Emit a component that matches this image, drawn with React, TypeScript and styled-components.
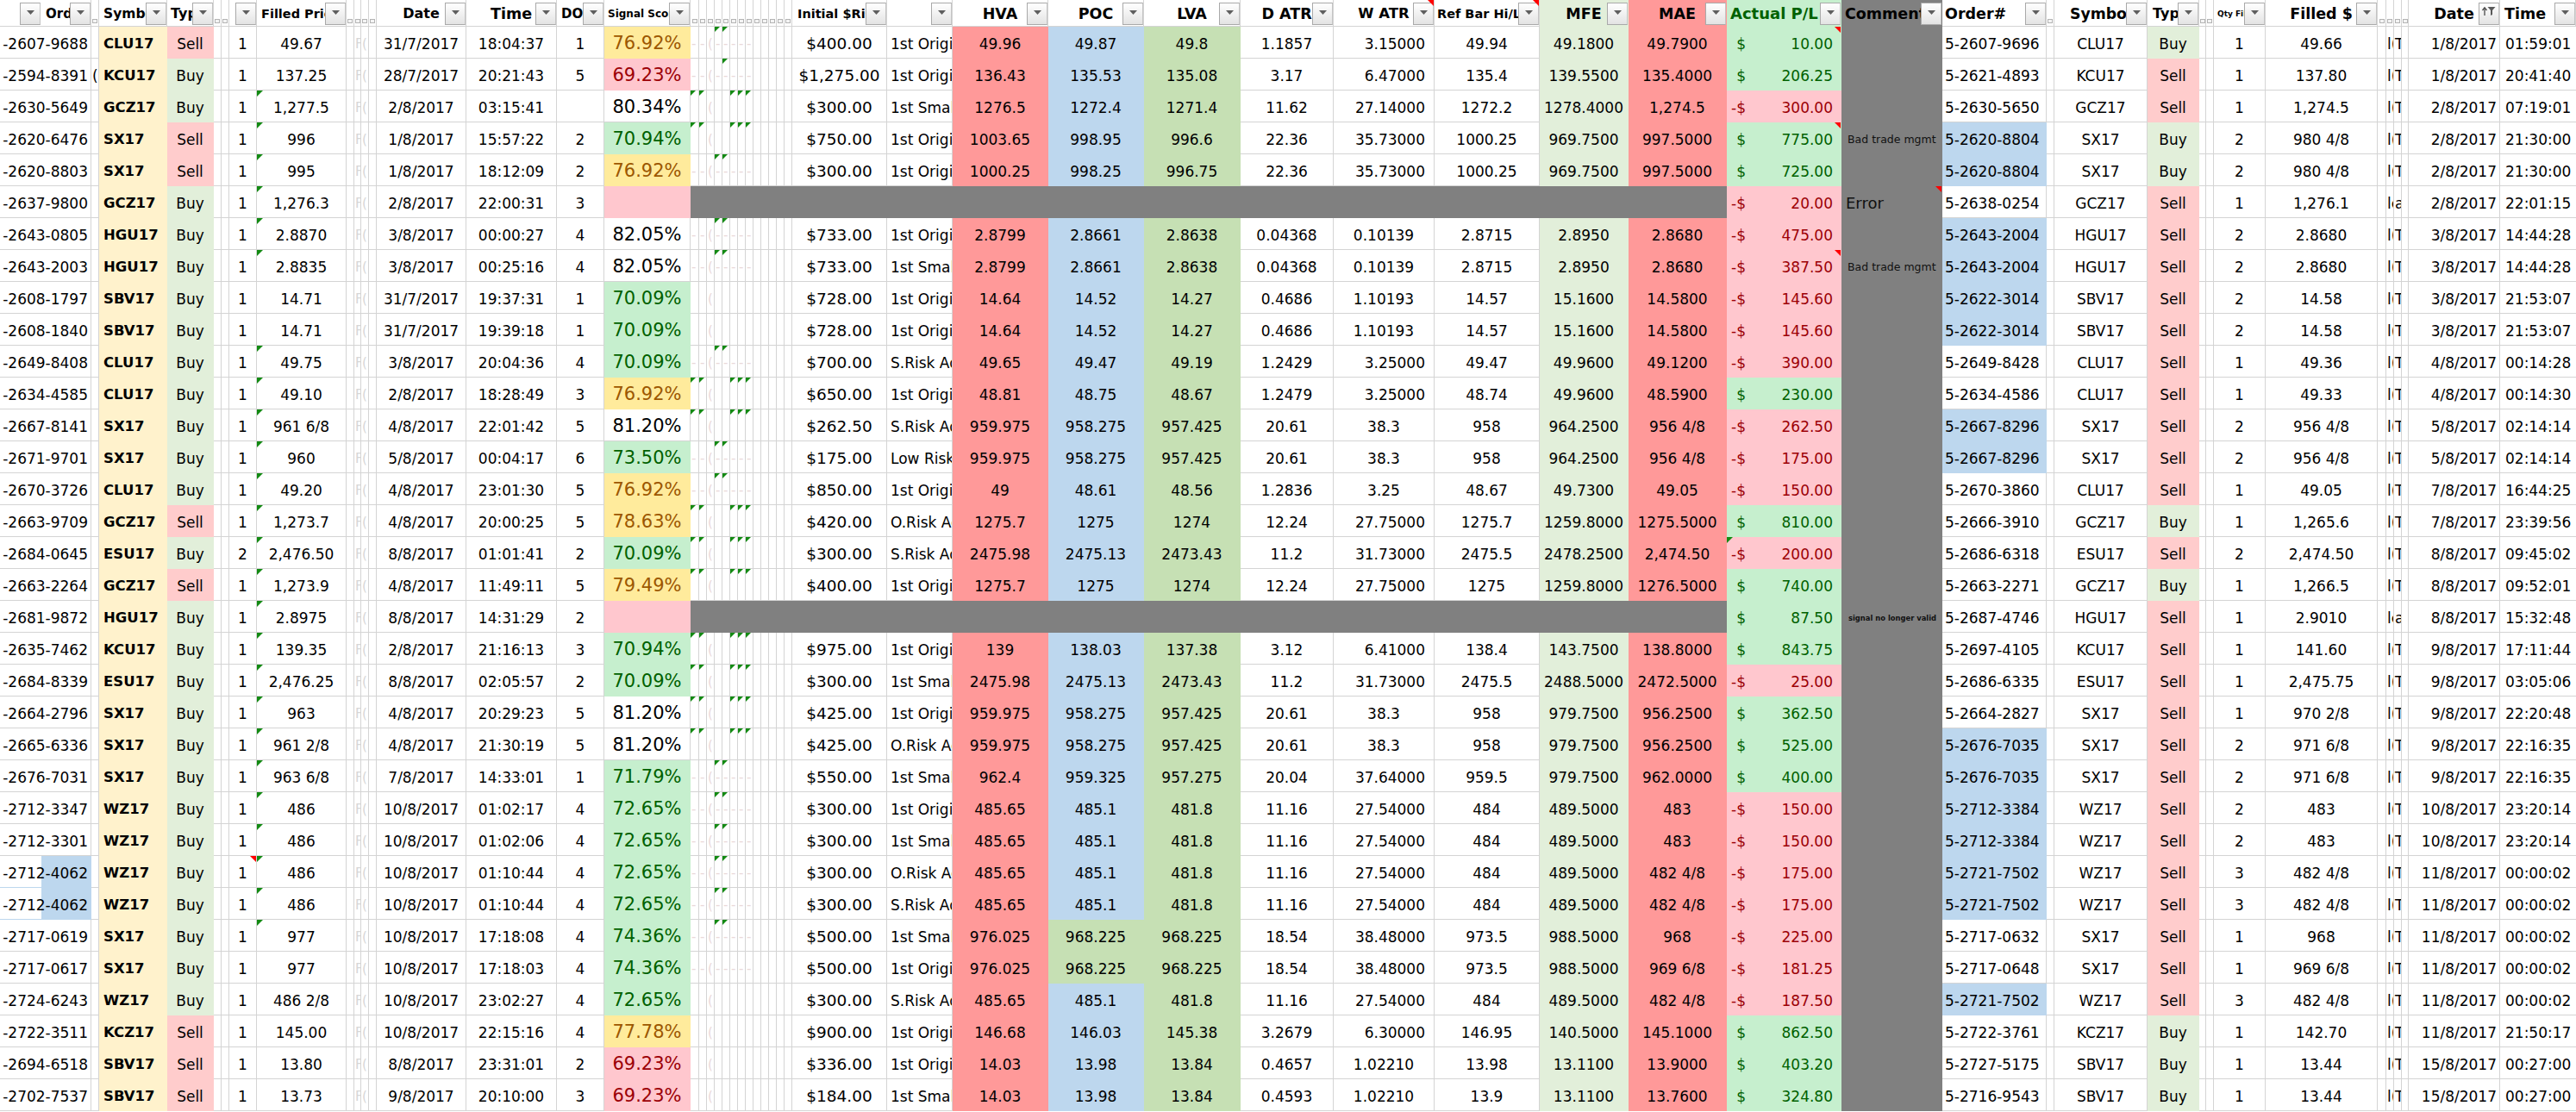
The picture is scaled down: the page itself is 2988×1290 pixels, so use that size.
import React from 'react';
import styled, { createGlobalStyle, css } from 'styled-components';

const GRID = '#d4d4d4';
const YEL = '#fff2cc';
const SELL = '#ffcccc';
const BUY = '#e2efda';
const HVA = '#ff9999';
const POC = '#bdd7ee';
const LVA = '#c6e0b4';
const MFE = '#e2efda';
const MAE = '#ff9999';
const GOODBG = '#c6efce';
const GOODFG = '#006100';
const BADBG = '#ffc7ce';
const BADFG = '#9c0006';
const NEUBG = '#ffeb9c';
const NEUFG = '#9c5700';
const GRAY = '#808080';
const BLUE = '#bdd7ee';

const WIDTHS = [
  106, 9, 79, 54, 9, 9, 32, 104, 9, 8, 9, 9, 104, 105, 55, 100,
  10, 9, 9, 9, 9, 9, 9, 9, 9, 9, 9, 9, 9,
  110, 76, 111, 111, 112, 108, 117, 122, 103, 114, 133, 117, 121, 9, 108, 60, 8, 9, 60, 130, 10, 9, 9, 8, 106, 88,
];
const TEMPLATE = WIDTHS.map((w) => `${w}px`).join(' ');
const TOTAL = WIDTHS.reduce((a, b) => a + b, 0);

const GlobalStyle = createGlobalStyle`
  html, body { margin: 0; padding: 0; background: #fff; overflow: hidden; }
  body { font-family: "DejaVu Sans", Verdana, sans-serif; }
`;

const Sheet = styled.div`
  display: flex;
  flex-direction: column;
  width: ${TOTAL}px;
  font-family: "DejaVu Sans", Verdana, sans-serif;
`;

const Row = styled.div<{ $h: number }>`
  display: grid;
  grid-template-columns: ${TEMPLATE};
  height: ${(p) => p.$h}px;
`;

const cellBase = css`
  position: relative;
  box-sizing: border-box;
  height: 100%;
  display: flex;
  align-items: center;
  padding-top: 3px;
  white-space: nowrap;
  overflow: hidden;
  font-size: 17px;
  color: #000;
  background: #fff;
  border-right: 1px solid ${GRID};
  border-bottom: 1px solid ${GRID};
`;

const filled = (bg?: string) =>
  bg
    ? css`
        background: ${bg};
        border-color: ${bg};
      `
    : '';

/* ---------- header ---------- */

const HeaderCell = styled.div<{ $bg?: string; $align?: 'left' | 'center'; $pad?: number; $size?: number; $fg?: string }>`
  position: relative;
  box-sizing: border-box;
  height: 100%;
  display: flex;
  align-items: center;
  justify-content: ${(p) => (p.$align === 'center' ? 'center' : 'flex-start')};
  padding-left: ${(p) => (p.$align === 'center' ? 0 : p.$pad ?? 4)}px;
  padding-top: 1px;
  background: ${(p) => p.$bg ?? '#fff'};
  border-right: 1px solid ${(p) => p.$bg ?? GRID};
  border-bottom: 1px solid ${(p) => p.$bg ?? GRID};
  font-weight: 700;
  font-size: ${(p) => p.$size ?? 17}px;
  color: ${(p) => p.$fg ?? '#000'};
  white-space: nowrap;
  overflow: hidden;
`;

const FilterButton = styled.span<{ $left?: number }>`
  position: absolute;
  top: 3px;
  ${(p) => (p.$left !== undefined ? `left: ${p.$left}px;` : 'right: 0;')}
  width: 24px;
  height: 26px;
  box-sizing: border-box;
  border: 1px solid #a9a9a9;
  border-right-color: #c4c4c4;
  background: linear-gradient(#ffffff, #e3e3e3);
  display: flex;
  justify-content: center;
  align-items: flex-start;
  padding-top: 8px;
`;

const TinyIcon = styled.span`
  position: absolute;
  bottom: 3px;
  left: 50%;
  margin-left: -3px;
  width: 6px;
  height: 5px;
  box-sizing: border-box;
  border: 1px solid #b4b4b4;
  background: #f4f4f4;
`;

const GreenMark = styled.span<{ $size?: number }>`
  position: absolute;
  top: 0;
  left: 0;
  width: 0;
  height: 0;
  border-top: ${(p) => p.$size ?? 7}px solid #138a13;
  border-right: ${(p) => p.$size ?? 7}px solid transparent;
`;

const RedMark = styled.span`
  position: absolute;
  top: 0;
  right: 0;
  width: 0;
  height: 0;
  border-top: 7px solid #ff0000;
  border-left: 7px solid transparent;
`;

const Dropdown = ({ left }: { left?: number }) => (
  <FilterButton $left={left}>
    <svg width="9" height="5" viewBox="0 0 9 5">
      <path d="M0 0h9L4.5 5z" fill="#5f5f5f" />
    </svg>
  </FilterButton>
);

const SortDropdown = () => (
  <FilterButton>
    <svg width="18" height="12" viewBox="0 0 18 12" style={{ marginTop: -5 }}>
      <path d="M4 11V3" stroke="#4a4a4a" strokeWidth="1.3" />
      <path d="M1.5 5L4 1.8 6.5 5" fill="none" stroke="#4a4a4a" strokeWidth="1.3" />
      <path d="M7.5 1h9l-3.5 4v5l-2 1V5z" fill="#5a5a5a" />
    </svg>
  </FilterButton>
);

type Head = {
  t?: string;
  s?: number;
  a?: 'left' | 'center';
  p?: number;
  b?: boolean;
  bg?: string;
  c?: string;
  lb?: boolean;
  red?: boolean;
  sort?: boolean;
  ic?: boolean;
};

const NARROW_HEAD: Head = { ic: true };
const HEAD: Head[] = [
  { t: 'Order#', s: 15, a: 'left', p: 53, b: true, lb: true },
  NARROW_HEAD,
  { t: 'Symbol', s: 15.5, a: 'left', p: 5, b: true },
  { t: 'Type', s: 16, a: 'left', p: 4, b: true },
  NARROW_HEAD,
  NARROW_HEAD,
  { b: true },
  { t: 'Filled Price', s: 14.5, a: 'left', p: 5, b: true },
  NARROW_HEAD,
  NARROW_HEAD,
  NARROW_HEAD,
  NARROW_HEAD,
  { t: 'Date', s: 16, a: 'center', b: true },
  { t: 'Time', s: 17.5, a: 'center', b: true },
  { t: 'DOW', s: 15, a: 'left', p: 5, b: true },
  { t: 'Signal Score', s: 12, a: 'left', p: 4, b: true },
  ...Array.from({ length: 13 }, () => NARROW_HEAD),
  { t: 'Initial $Risk', s: 14.5, a: 'left', p: 6, b: true },
  { b: true },
  { t: 'HVA', s: 17.5, a: 'center', b: true },
  { t: 'POC', s: 17.5, a: 'center', b: true },
  { t: 'LVA', s: 17.5, a: 'center', b: true },
  { t: 'D ATR', s: 17.5, a: 'center', b: true },
  { t: 'W ATR', s: 16.5, a: 'center', b: true, red: true },
  { t: 'Ref Bar Hi/Lo', s: 14.5, a: 'left', p: 3, b: true, red: true },
  { t: 'MFE', s: 17.5, a: 'center', b: true, bg: MFE },
  { t: 'MAE', s: 17.5, a: 'center', b: true, bg: MAE },
  { t: 'Actual P/L', s: 18, a: 'left', p: 4, b: true, bg: GOODBG, c: GOODFG },
  { t: 'Comments', s: 17.5, a: 'left', p: 4, b: true, bg: GRAY },
  { t: 'Order#', s: 17.5, a: 'left', p: 3, b: true },
  NARROW_HEAD,
  { t: 'Symbol', s: 17.3, a: 'left', p: 18, b: true },
  { t: 'Type', s: 16, a: 'left', p: 6, b: true },
  NARROW_HEAD,
  NARROW_HEAD,
  { t: 'Qty Filled', s: 9, a: 'left', p: 4, b: true },
  { t: 'Filled $', s: 17.5, a: 'center', b: true },
  NARROW_HEAD,
  NARROW_HEAD,
  NARROW_HEAD,
  NARROW_HEAD,
  { t: 'Date', s: 17.5, a: 'center', b: true, sort: true },
  { t: 'Time', s: 17.5, a: 'left', p: 5, b: true },
];

/* ---------- body cells ---------- */

const OrderCell = styled.div<{ $hl?: boolean }>`
  ${cellBase}
  justify-content: flex-end;
  padding-right: 3px;
  ${(p) =>
    p.$hl &&
    css`
      background: linear-gradient(to right, #fff 48px, ${BLUE} 48px);
      border-right-color: ${BLUE};
      border-bottom-color: ${BLUE};
    `}
`;

const SymbolCell = styled.div`
  ${cellBase}
  ${filled(YEL)}
  justify-content: flex-start;
  padding-left: 5px;
  font-weight: 700;
  font-size: 16.5px;
`;

const TypeCell = styled.div<{ $sell: boolean }>`
  ${cellBase}
  ${(p) => filled(p.$sell ? SELL : BUY)}
  justify-content: center;
`;

const NarrowCell = styled.div<{ $tone?: 'faint' | 'pink' | 'dark' }>`
  ${cellBase}
  justify-content: flex-start;
  padding-left: 1px;
  color: ${(p) => (p.$tone === 'faint' ? '#d6d6d6' : p.$tone === 'pink' ? '#ead9d9' : '#000')};
  font-size: ${(p) => (p.$tone === 'dark' ? 17 : 15)}px;
`;

const ValueCell = styled.div<{ $bg?: string; $size?: number }>`
  ${cellBase}
  ${(p) => filled(p.$bg)}
  justify-content: center;
  font-size: ${(p) => p.$size ?? 17}px;
`;

const AtrCell = styled.div<{ $right: boolean }>`
  ${cellBase}
  justify-content: ${(p) => (p.$right ? 'flex-end' : 'center')};
  padding-right: ${(p) => (p.$right ? 10 : 0)}px;
`;

type Tone = 'y' | 'r' | 'g' | 'w' | 'p';
const TONES: Record<Tone, [string | undefined, string]> = {
  y: [NEUBG, NEUFG],
  r: [BADBG, BADFG],
  g: [GOODBG, GOODFG],
  w: [undefined, '#000'],
  p: [BADBG, BADFG],
};

const SignalCell = styled.div<{ $tone: Tone }>`
  ${cellBase}
  ${(p) => filled(TONES[p.$tone]?.[0])}
  color: ${(p) => TONES[p.$tone]?.[1] ?? '#000'};
  justify-content: center;
  font-size: 21px;
  padding-top: 2px;
`;

const RiskCell = styled.div`
  ${cellBase}
  justify-content: center;
  font-size: 18.5px;
`;

const SetupCell = styled.div`
  ${cellBase}
  justify-content: flex-start;
  padding-left: 4px;
`;

const SeparatorCell = styled.div`
  ${cellBase}
  ${filled(GRAY)}
  grid-column: 17 / 40;
`;

const PLCell = styled.div<{ $neg: boolean }>`
  ${cellBase}
  ${(p) => filled(p.$neg ? BADBG : GOODBG)}
  color: ${(p) => (p.$neg ? BADFG : GOODFG)};
  padding-right: 9px;
`;

const PLSign = styled.span`
  flex: none;
  width: 22px;
  text-align: right;
`;

const PLAmount = styled.span`
  flex: 1;
  text-align: right;
`;

const CommentCell = styled.div<{ $size: number; $pad: number; $weight?: number }>`
  ${cellBase}
  ${filled(GRAY)}
  color: #111;
  justify-content: flex-start;
  padding-left: ${(p) => p.$pad}px;
  font-size: ${(p) => p.$size}px;
  font-weight: ${(p) => p.$weight ?? 400};
`;

const RightOrderCell = styled.div<{ $blue: boolean }>`
  ${cellBase}
  ${(p) => filled(p.$blue ? BLUE : undefined)}
  justify-content: flex-start;
  padding-left: 3px;
`;

const RightDateCell = styled.div`
  ${cellBase}
  justify-content: flex-end;
  padding-right: 3px;
`;

const RightTimeCell = styled.div`
  ${cellBase}
  justify-content: flex-start;
  padding-left: 6px;
  border-right: none;
`;

/* ---------- data ---------- */

const LEFT = `
-2607-9688|CLU17|Sell|1|49.67|31/7/2017|18:04:37|1|76.92%|y|A|$400.00|1st Original|49.96|49.87|49.8|1.1857|3.15000|49.94|49.1800|49.7900|10.00
-2594-8391|KCU17|Buy|1|137.25|28/7/2017|20:21:43|5|69.23%|r|C|$1,275.00|1st Original|136.43|135.53|135.08|3.17|6.47000|135.4|139.5500|135.4000|206.25
-2630-5649|GCZ17|Buy|1|1,277.5|2/8/2017|03:15:41||80.34%|w|B|$300.00|1st Small|1276.5|1272.4|1271.4|11.62|27.14000|1272.2|1278.4000|1,274.5|-300.00
-2620-6476|SX17|Sell|1|996|1/8/2017|15:57:22|2|70.94%|g|B|$750.00|1st Original|1003.65|998.95|996.6|22.36|35.73000|1000.25|969.7500|997.5000|775.00
-2620-8803|SX17|Sell|1|995|1/8/2017|18:12:09|2|76.92%|y|A|$300.00|1st Original|1000.25|998.25|996.75|22.36|35.73000|1000.25|969.7500|997.5000|725.00
-2637-9800|GCZ17|Buy|1|1,276.3|2/8/2017|22:00:31|3||p|X|-20.00
-2643-0805|HGU17|Buy|1|2.8870|3/8/2017|00:00:27|4|82.05%|w|A|$733.00|1st Original|2.8799|2.8661|2.8638|0.04368|0.10139|2.8715|2.8950|2.8680|-475.00
-2643-2003|HGU17|Buy|1|2.8835|3/8/2017|00:25:16|4|82.05%|w|A|$733.00|1st Small|2.8799|2.8661|2.8638|0.04368|0.10139|2.8715|2.8950|2.8680|-387.50
-2608-1797|SBV17|Buy|1|14.71|31/7/2017|19:37:31|1|70.09%|g||$728.00|1st Original|14.64|14.52|14.27|0.4686|1.10193|14.57|15.1600|14.5800|-145.60
-2608-1840|SBV17|Buy|1|14.71|31/7/2017|19:39:18|1|70.09%|g||$728.00|1st Original|14.64|14.52|14.27|0.4686|1.10193|14.57|15.1600|14.5800|-145.60
-2649-8408|CLU17|Buy|1|49.75|3/8/2017|20:04:36|4|70.09%|g|A|$700.00|S.Risk Adj|49.65|49.47|49.19|1.2429|3.25000|49.47|49.9600|49.1200|-390.00
-2634-4585|CLU17|Buy|1|49.10|2/8/2017|18:28:49|3|76.92%|y|B|$650.00|1st Original|48.81|48.75|48.67|1.2479|3.25000|48.74|49.9600|48.5900|230.00
-2667-8141|SX17|Buy|1|961 6/8|4/8/2017|22:01:42|5|81.20%|w|B|$262.50|S.Risk Adj|959.975|958.275|957.425|20.61|38.3|958|964.2500|956 4/8|-262.50
-2671-9701|SX17|Buy|1|960|5/8/2017|00:04:17|6|73.50%|g|A|$175.00|Low Risk|959.975|958.275|957.425|20.61|38.3|958|964.2500|956 4/8|-175.00
-2670-3726|CLU17|Buy|1|49.20|4/8/2017|23:01:30|5|76.92%|y|A|$850.00|1st Original|49|48.61|48.56|1.2836|3.25|48.67|49.7300|49.05|-150.00
-2663-9709|GCZ17|Sell|1|1,273.7|4/8/2017|20:00:25|5|78.63%|y|B|$420.00|O.Risk Adj|1275.7|1275|1274|12.24|27.75000|1275.7|1259.8000|1275.5000|810.00
-2684-0645|ESU17|Buy|2|2,476.50|8/8/2017|01:01:41|2|70.09%|g|B|$300.00|S.Risk Adj|2475.98|2475.13|2473.43|11.2|31.73000|2475.5|2478.2500|2,474.50|-200.00
-2663-2264|GCZ17|Sell|1|1,273.9|4/8/2017|11:49:11|5|79.49%|y|B|$400.00|1st Original|1275.7|1275|1274|12.24|27.75000|1275|1259.8000|1276.5000|740.00
-2681-9872|HGU17|Buy|1|2.8975|8/8/2017|14:31:29|2||p|X|87.50
-2635-7462|KCU17|Buy|1|139.35|2/8/2017|21:16:13|3|70.94%|g|B|$975.00|1st Original|139|138.03|137.38|3.12|6.41000|138.4|143.7500|138.8000|843.75
-2684-8339|ESU17|Buy|1|2,476.25|8/8/2017|02:05:57|2|70.09%|g|B|$300.00|1st Small|2475.98|2475.13|2473.43|11.2|31.73000|2475.5|2488.5000|2472.5000|-25.00
-2664-2796|SX17|Buy|1|963|4/8/2017|20:29:23|5|81.20%|w|B|$425.00|1st Original|959.975|958.275|957.425|20.61|38.3|958|979.7500|956.2500|362.50
-2665-6336|SX17|Buy|1|961 2/8|4/8/2017|21:30:19|5|81.20%|w|B|$425.00|O.Risk Adj|959.975|958.275|957.425|20.61|38.3|958|979.7500|956.2500|525.00
-2676-7031|SX17|Buy|1|963 6/8|7/8/2017|14:33:01|1|71.79%|g|A|$550.00|1st Small|962.4|959.325|957.275|20.04|37.64000|959.5|979.7500|962.0000|400.00
-2712-3347|WZ17|Buy|1|486|10/8/2017|01:02:17|4|72.65%|g|A|$300.00|1st Original|485.65|485.1|481.8|11.16|27.54000|484|489.5000|483|-150.00
-2712-3301|WZ17|Buy|1|486|10/8/2017|01:02:06|4|72.65%|g|A|$300.00|1st Small|485.65|485.1|481.8|11.16|27.54000|484|489.5000|483|-150.00
-2712-4062|WZ17|Buy|1|486|10/8/2017|01:10:44|4|72.65%|g|A|$300.00|O.Risk Adj|485.65|485.1|481.8|11.16|27.54000|484|489.5000|482 4/8|-175.00
-2712-4062|WZ17|Buy|1|486|10/8/2017|01:10:44|4|72.65%|g|A|$300.00|S.Risk Adj|485.65|485.1|481.8|11.16|27.54000|484|489.5000|482 4/8|-175.00
-2717-0619|SX17|Buy|1|977|10/8/2017|17:18:08|4|74.36%|g|A|$500.00|1st Small|976.025|968.225|968.225|18.54|38.48000|973.5|988.5000|968|-225.00
-2717-0617|SX17|Buy|1|977|10/8/2017|17:18:03|4|74.36%|g|D|$500.00|1st Original|976.025|968.225|968.225|18.54|38.48000|973.5|988.5000|969 6/8|-181.25
-2724-6243|WZ17|Buy|1|486 2/8|10/8/2017|23:02:27|4|72.65%|g||$300.00|S.Risk Adj|485.65|485.1|481.8|11.16|27.54000|484|489.5000|482 4/8|-187.50
-2722-3511|KCZ17|Sell|1|145.00|10/8/2017|22:15:16|4|77.78%|y||$900.00|1st Original|146.68|146.03|145.38|3.2679|6.30000|146.95|140.5000|145.1000|862.50
-2694-6518|SBV17|Sell|1|13.80|8/8/2017|23:31:01|2|69.23%|r||$336.00|1st Original|14.03|13.98|13.84|0.4657|1.02210|13.98|13.1100|13.9000|403.20
-2702-7537|SBV17|Sell|1|13.73|9/8/2017|20:10:00|3|69.23%|r||$184.00|1st Small|14.03|13.98|13.84|0.4593|1.02210|13.9|13.1100|13.7600|324.80
`
  .trim()
  .split('\n')
  .map((l) => l.split('|'));

const RIGHT = `
5-2607-9696|CLU17|Buy|1|49.66|1/8/2017|01:59:01|
5-2621-4893|KCU17|Sell|1|137.80|1/8/2017| 20:41:40|
5-2630-5650|GCZ17|Sell|1|1,274.5|2/8/2017|07:19:01|
5-2620-8804|SX17|Buy|2|980 4/8|2/8/2017|21:30:00|b
5-2620-8804|SX17|Buy|2|980 4/8|2/8/2017|21:30:00|b
5-2638-0254|GCZ17|Sell|1|1,276.1|2/8/2017|22:01:15|
5-2643-2004|HGU17|Sell|2|2.8680|3/8/2017|14:44:28|b
5-2643-2004|HGU17|Sell|2|2.8680|3/8/2017|14:44:28|b
5-2622-3014|SBV17|Sell|2|14.58|3/8/2017|21:53:07|b
5-2622-3014|SBV17|Sell|2|14.58|3/8/2017|21:53:07|b
5-2649-8428|CLU17|Sell|1|49.36|4/8/2017|00:14:28|
5-2634-4586|CLU17|Sell|1|49.33|4/8/2017|00:14:30|
5-2667-8296|SX17|Sell|2|956 4/8|5/8/2017|02:14:14|b
5-2667-8296|SX17|Sell|2|956 4/8|5/8/2017|02:14:14|b
5-2670-3860|CLU17|Sell|1|49.05|7/8/2017|16:44:25|
5-2666-3910|GCZ17|Buy|1|1,265.6|7/8/2017|23:39:56|
5-2686-6318|ESU17|Sell|2|2,474.50|8/8/2017|09:45:02|
5-2663-2271|GCZ17|Buy|1|1,266.5|8/8/2017| 09:52:01|
5-2687-4746|HGU17|Sell|1|2.9010|8/8/2017|15:32:48|
5-2697-4105|KCU17|Sell|1|141.60|9/8/2017|17:11:44|
5-2686-6335|ESU17|Sell|1|2,475.75|9/8/2017|03:05:06|
5-2664-2827|SX17|Sell|1|970 2/8|9/8/2017|22:20:48|
5-2676-7035|SX17|Sell|2|971 6/8|9/8/2017|22:16:35|b
5-2676-7035|SX17|Sell|2|971 6/8|9/8/2017|22:16:35|b
5-2712-3384|WZ17|Sell|2|483|10/8/2017|23:20:14|b
5-2712-3384|WZ17|Sell|2|483|10/8/2017|23:20:14|b
5-2721-7502|WZ17|Sell|3|482 4/8|11/8/2017|00:00:02|b
5-2721-7502|WZ17|Sell|3|482 4/8|11/8/2017|00:00:02|b
5-2717-0632|SX17|Sell|1|968|11/8/2017|00:00:02|
5-2717-0648|SX17|Sell|1|969 6/8|11/8/2017|00:00:02|
5-2721-7502|WZ17|Sell|3|482 4/8|11/8/2017|00:00:02|b
5-2722-3761|KCZ17|Buy|1|142.70|11/8/2017|21:50:17|
5-2727-5175|SBV17|Buy|1|13.44|15/8/2017|00:27:00|
5-2716-9543|SBV17|Buy|1|13.44|15/8/2017|00:27:00|
`
  .trim()
  .split('\n')
  .map((l) => l.split('|'));

const FP_TRI = new Set([3, 4, 5, 6, 7, 8, 11, 12, 13, 14, 15, 16, 17, 18, 19, 20, 21, 22, 23, 24, 25, 26, 27, 28, 29]);
const POC_GREEN = new Set([29, 30]);
const ORDER_HL = new Set([27, 28]);
const PL_RED = new Set([1, 4, 8]);

const COMMENTS: Record<number, { t: string; s: number; p: number; w?: number }> = {
  4: { t: 'Bad trade mgmt', s: 12.5, p: 7 },
  6: { t: 'Error', s: 18, p: 5 },
  8: { t: 'Bad trade mgmt', s: 12.5, p: 7 },
  19: { t: 'signal no longer valid', s: 8.4, p: 8, w: 600 },
};

const TRI_PATTERNS: Record<string, number[]> = {
  A: [3, 4],
  B: [0, 1, 5, 6, 7],
  C: [4],
  D: [],
};
const DASHES = ['-', '-', '(', '-', '-', '-', '-', '-'];

function FlagCells({ pattern }: { pattern: string }) {
  const tri = TRI_PATTERNS[pattern] ?? [];
  const dashed = pattern === 'A' || pattern === 'C' || pattern === 'D';
  return (
    <>
      {Array.from({ length: 13 }, (_, k) => (
        <NarrowCell key={k} $tone="pink">
          {tri.includes(k) && <GreenMark $size={6} />}
          {dashed ? DASHES[k] ?? '' : k === 2 ? '(' : ''}
        </NarrowCell>
      ))}
    </>
  );
}

function HeaderRow() {
  return (
    <Row $h={31}>
      {HEAD.map((h, i) => (
        <HeaderCell key={i} $bg={h.bg} $align={h.a} $pad={h.p} $size={h.s} $fg={h.c}>
          {h.lb && <Dropdown left={23} />}
          {h.t}
          {h.ic && <TinyIcon />}
          {h.b && (h.sort ? <SortDropdown /> : <Dropdown />)}
          {h.red && <RedMark />}
        </HeaderCell>
      ))}
    </Row>
  );
}

const f = (l: string[], i: number) => l[i] ?? '';

function DataRow({ l, r, n }: { l: string[]; r: string[]; n: number }) {
  const gray = l[10] === 'X';
  const plRaw = l[l.length - 1] ?? '';
  const neg = plRaw.startsWith('-');
  const amount = plRaw.replace('-', '');
  const comment = COMMENTS[n];
  const oddText = gray ? ['le', 'a'] : ['l(', 'T'];
  const watr = f(l, 17);
  return (
    <Row $h={37}>
      <OrderCell $hl={ORDER_HL.has(n)}>{f(l, 0)}</OrderCell>
      <NarrowCell $tone="dark">{n === 2 ? '(' : ''}</NarrowCell>
      <SymbolCell>{f(l, 1)}</SymbolCell>
      <TypeCell $sell={l[2] === 'Sell'}>{f(l, 2)}</TypeCell>
      <NarrowCell />
      <NarrowCell />
      <ValueCell>
        {f(l, 3)}
        {n === 27 && <RedMark />}
      </ValueCell>
      <ValueCell>
        {FP_TRI.has(n) && <GreenMark />}
        {f(l, 4)}
      </ValueCell>
      <NarrowCell />
      <NarrowCell $tone="faint">F</NarrowCell>
      <NarrowCell $tone="faint">(</NarrowCell>
      <NarrowCell />
      <ValueCell>{f(l, 5)}</ValueCell>
      <ValueCell>{f(l, 6)}</ValueCell>
      <ValueCell>{f(l, 7)}</ValueCell>
      <SignalCell $tone={(l[9] || 'w') as Tone}>{f(l, 8)}</SignalCell>
      {gray ? (
        <SeparatorCell />
      ) : (
        <>
          <FlagCells pattern={f(l, 10)} />
          <RiskCell>{f(l, 11)}</RiskCell>
          <SetupCell>{f(l, 12)}</SetupCell>
          <ValueCell $bg={HVA}>{f(l, 13)}</ValueCell>
          <ValueCell $bg={POC_GREEN.has(n) ? LVA : POC}>{f(l, 14)}</ValueCell>
          <ValueCell $bg={LVA}>{f(l, 15)}</ValueCell>
          <ValueCell>{f(l, 16)}</ValueCell>
          <AtrCell $right={watr.endsWith('000')}>{watr}</AtrCell>
          <ValueCell>{f(l, 18)}</ValueCell>
          <ValueCell $bg={MFE}>{f(l, 19)}</ValueCell>
          <ValueCell $bg={MAE}>{f(l, 20)}</ValueCell>
        </>
      )}
      <PLCell $neg={neg}>
        {n === 17 && <GreenMark />}
        {PL_RED.has(n) && <RedMark />}
        <PLSign>{neg ? '-$' : '$'}</PLSign>
        <PLAmount>{amount}</PLAmount>
      </PLCell>
      <CommentCell $size={comment?.s ?? 12} $pad={comment?.p ?? 6} $weight={comment?.w}>
        {comment?.t}
        {n === 6 && <RedMark />}
      </CommentCell>
      <RightOrderCell $blue={r[7] === 'b'}>{f(r, 0)}</RightOrderCell>
      <NarrowCell />
      <ValueCell>{f(r, 1)}</ValueCell>
      <TypeCell $sell={r[2] === 'Sell'}>{f(r, 2)}</TypeCell>
      <NarrowCell />
      <NarrowCell />
      <ValueCell>{f(r, 3)}</ValueCell>
      <ValueCell>{f(r, 4)}</ValueCell>
      <NarrowCell />
      <NarrowCell $tone="dark">{oddText[0]}</NarrowCell>
      <NarrowCell $tone="dark">{oddText[1]}</NarrowCell>
      <NarrowCell />
      <RightDateCell>{f(r, 5)}</RightDateCell>
      <RightTimeCell>{f(r, 6)}</RightTimeCell>
    </Row>
  );
}

export default function App() {
  return (
    <>
      <GlobalStyle />
      <Sheet>
        <HeaderRow />
        {LEFT.map((l, i) => (
          <DataRow key={i} l={l} r={RIGHT[i] ?? []} n={i + 1} />
        ))}
      </Sheet>
    </>
  );
}
